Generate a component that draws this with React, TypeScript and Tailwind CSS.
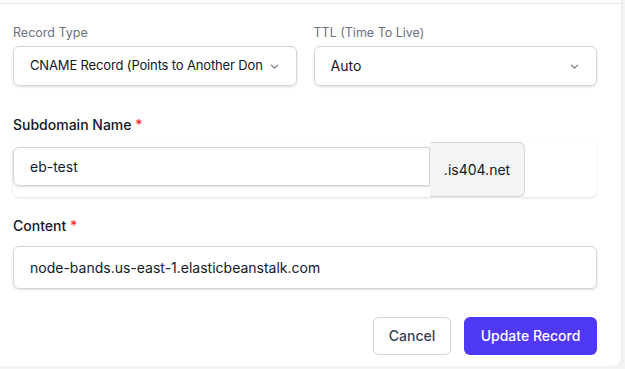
import React from 'react';

function Chevron() {
  return (
    <svg className="w-[11px] h-[11px] text-gray-500 shrink-0" viewBox="0 0 12 12" fill="none" stroke="currentColor" strokeWidth="1.2" strokeLinecap="round" strokeLinejoin="round">
      <path d="M2.5 4.5 6 7.8l3.5-3.3" />
    </svg>
  );
}

export default function App() {
  return (
    <div className="w-[625px] h-[369px] bg-[#f3f4f6] flex overflow-hidden" style={{ fontFamily: 'Inter, "Noto Sans", sans-serif' }}>
      <div className="w-[621px] h-[366px] bg-white rounded-br-lg shadow-[1px_0_2px_rgba(0,0,0,0.06)] flex flex-col">
        <div className="h-[4px] border-b border-gray-200 shrink-0" />

        {/* Record type / TTL */}
        <div className="grid grid-cols-2 gap-[17px] pl-[13px] pr-[24px] pt-[21px]">
          <div>
            <label className="block text-[12.5px] leading-4 text-gray-500">Record Type</label>
            <div className="mt-[5px] h-[40px] border border-gray-300 rounded-md shadow-sm flex items-center justify-between pl-4 pr-[16px]">
              <span className="text-[13px] tracking-[-0.15px] text-gray-900 whitespace-nowrap">CNAME Record (Points to Another Don</span>
              <Chevron />
            </div>
          </div>
          <div>
            <label className="block text-[12.5px] leading-4 text-gray-500">TTL (Time To Live)</label>
            <div className="mt-[5px] h-[40px] border border-gray-300 rounded-md shadow-sm flex items-center justify-between pl-4 pr-[16px]">
              <span className="text-sm text-gray-900">Auto</span>
              <Chevron />
            </div>
          </div>
        </div>

        {/* Subdomain */}
        <div className="pl-[13px] pr-[24px] pt-[29px]">
          <label className="block text-sm leading-5 font-medium text-gray-900">
            Subdomain Name <span className="text-red-500">*</span>
          </label>
          <div className="mt-[7px] h-[55px] flex rounded-md shadow-sm">
            <div className="w-[417px] mt-[5px] h-[39px] border border-gray-300 rounded-l-md shadow-sm flex items-center px-4">
              <span className="text-sm text-gray-900">eb-test</span>
            </div>
            <div className="w-[95px] bg-gray-100 border border-l-0 border-gray-300 rounded-r-md flex items-center justify-center">
              <span className="text-sm text-gray-900">.is404.net</span>
            </div>
          </div>
        </div>

        {/* Content */}
        <div className="pl-[13px] pr-[24px] pt-[19px]">
          <label className="block text-sm leading-5 font-medium text-gray-900">
            Content <span className="text-red-500">*</span>
          </label>
          <div className="mt-[10px] h-[43px] border border-gray-300 rounded-md shadow-sm flex items-center px-4">
            <span className="text-sm text-gray-900">node-bands.us-east-1.elasticbeanstalk.com</span>
          </div>
        </div>

        {/* Actions */}
        <div className="flex justify-end gap-[13px] pr-[24px] pt-[28px]">
          <button className="w-[78px] h-[38px] border border-gray-300 rounded-md bg-white text-sm font-medium text-gray-700">Cancel</button>
          <button className="w-[133px] h-[38px] rounded-md bg-indigo-600 text-sm font-medium text-white">Update Record</button>
        </div>
      </div>
    </div>
  );
}
